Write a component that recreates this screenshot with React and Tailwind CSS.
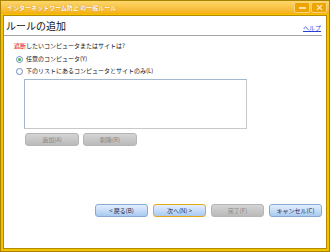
import React from "react";

const font = { fontFamily: '"Noto Sans CJK JP", "Noto Sans", sans-serif' };

function BlueBtn({ children, focused }) {
  return (
    <div
      className={`w-[53px] h-[13px] rounded-[3px] border flex items-center justify-center text-[6px] leading-none text-[#1a2a50] bg-gradient-to-b from-[#e4efff] to-[#a9c9ef] ${
        focused ? "border-[#e6a817]" : "border-[#86a9d6]"
      }`}
    >
      {children}
    </div>
  );
}

function GrayBtn({ children, w = "w-[53px]" }) {
  return (
    <div
      className={`${w} h-[13px] rounded-[3px] border border-[#b5b5b5] flex items-center justify-center text-[6px] leading-none text-[#858585] bg-gradient-to-b from-[#d4d4d4] to-[#bababa]`}
    >
      {children}
    </div>
  );
}

export default function App() {
  return (
    <div className="w-[330px] h-[252px] bg-white" style={font}>
      <div className="w-[330px] h-[252px] border border-[#a88400] bg-[#f3c300] flex flex-col">
        {/* title bar */}
        <div className="h-[13px] flex items-center justify-between bg-gradient-to-b from-[#fcd76a] to-[#f5b000] pl-[6px] pr-[2px]">
          <span className="text-[6px] leading-none text-white font-bold [text-shadow:0_0_1px_#b07000]">
            インターネットワーム防止 の一般ルール
          </span>
          <div className="flex gap-[1px]">
            <div className="w-[16px] h-[11px] rounded-[2px] border border-[#f9d27a] bg-[#eda400] flex items-center justify-center">
              <div className="w-[7px] h-[2px] bg-[#fbe1a8]" />
            </div>
            <div className="w-[16px] h-[11px] rounded-[2px] border border-[#f9d27a] bg-[#eda400] flex items-center justify-center">
              <svg width="7" height="7" viewBox="0 0 7 7">
                <path d="M1 1 L6 6 M6 1 L1 6" stroke="#fbe1a8" strokeWidth="1.6" />
              </svg>
            </div>
          </div>
        </div>
        {/* body */}
        <div className="flex-1 px-[2px] pb-[2px] pt-[1px]">
          <div className="h-full border border-[#b38a00] bg-white flex flex-col">
            <div className="flex items-end justify-between pl-[2px] pr-[5px] pt-[3px]">
              <span className="text-[10px] leading-[14px] text-[#111]">ルールの追加</span>
              <span className="text-[6px] leading-[9px] text-[#2a3ee0] underline mb-[1px]">ヘルプ</span>
            </div>
            <div className="h-[1px] bg-[#a6a6a6] mr-[4px] mt-[2px]" />
            <div className="pl-[10px] pt-[6px] text-[6px] leading-[8px] text-[#111]">
              <span className="text-[#e00000]">遮断</span>したいコンピュータまたはサイトは?
            </div>
            <div className="pl-[12px] pt-[5px] flex flex-col gap-[4px] text-[6px] leading-[8px] text-[#111]">
              <div className="flex items-center gap-[3px]">
                <div className="w-[7px] h-[7px] rounded-full border border-[#6a8cbf] bg-white flex items-center justify-center">
                  <div className="w-[3px] h-[3px] rounded-full bg-[#3cb043]" />
                </div>
                <span>任意のコンピュータ(Y)</span>
              </div>
              <div className="flex items-center gap-[3px]">
                <div className="w-[7px] h-[7px] rounded-full border border-[#6a8cbf] bg-white" />
                <span>下のリストにあるコンピュータとサイトのみ(L)</span>
              </div>
            </div>
            <div className="ml-[20px] mt-[4px] w-[223px] h-[50px] border border-[#a3b8d0] border-r-[#c8c8c8] border-b-[#c8c8c8] bg-white" />
            <div className="ml-[21px] mt-[4px] flex gap-[4px]">
              <GrayBtn w="w-[54px]">追加(A)</GrayBtn>
              <GrayBtn w="w-[54px]">削除(R)</GrayBtn>
            </div>
            <div className="flex-1" />
            <div className="flex justify-end gap-[5px] pr-[4px] pb-[31px]">
              <BlueBtn>&lt; 戻る(B)</BlueBtn>
              <BlueBtn focused>次へ(N) &gt;</BlueBtn>
              <GrayBtn>完了(F)</GrayBtn>
              <BlueBtn>キャンセル(C)</BlueBtn>
            </div>
          </div>
        </div>
      </div>
    </div>
  );
}
